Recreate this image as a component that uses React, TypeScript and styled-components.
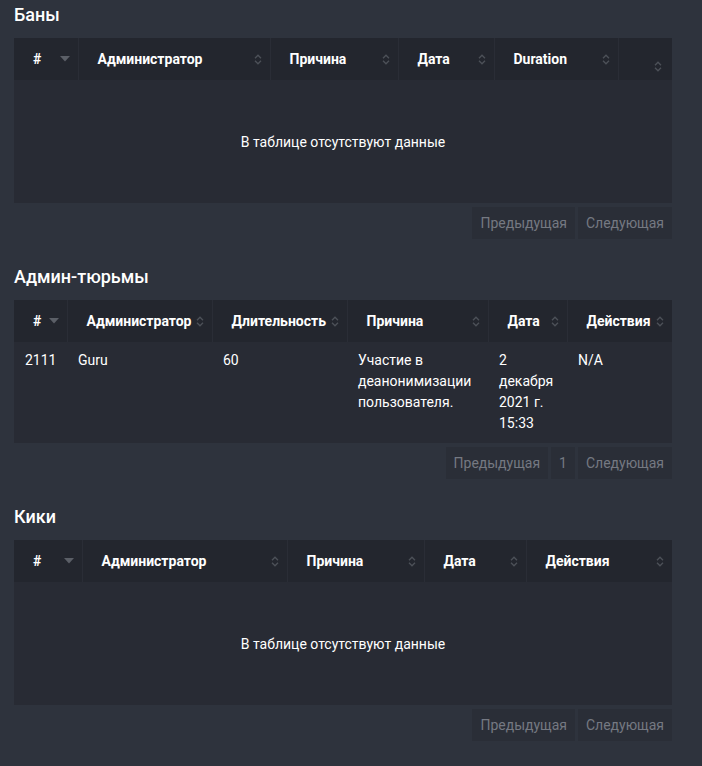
import React from 'react';
import styled, { createGlobalStyle } from 'styled-components';

type Column = { title: string; width: number; sort?: 'desc' | 'both'; iconLow?: boolean };

interface ISectionProps {
  title: string;
  columns: Column[];
  rows?: string[][];
  pages?: number[];
}

const GlobalStyle = createGlobalStyle`
  html, body {
    margin: 0;
    padding: 0;
    background: #2e333d;
  }
  body {
    font-family: Roboto, "Noto Sans", "Liberation Sans", sans-serif;
    color: #ffffff;
    font-size: 14px;
  }
`;

const SortIcon: React.FC<{ kind: 'desc' | 'both' }> = ({ kind }) =>
  kind === 'desc' ? (
    <Icon width="10" height="6" viewBox="0 0 10 6">
      <path d="M0 0 L10 0 L5 5.5 Z" fill="#5b5f67" />
    </Icon>
  ) : (
    <Icon width="8" height="11" viewBox="0 0 8 11">
      <path d="M1 4.2 L4 1.2 L7 4.2 M1 6.8 L4 9.8 L7 6.8" fill="none" stroke="#4d5159" strokeWidth="1.3" />
    </Icon>
  );

const Section: React.FC<ISectionProps> = ({ title, columns, rows = [], pages = [] }) => (
  <Block>
    <Title>{title}</Title>
    <Table>
      <colgroup>
        {columns.map((c, i) => <Col key={i} $w={c.width} />)}
      </colgroup>
      <thead>
        <tr>
          {columns.map((c, i) => (
            <HeadCell key={i} $low={c.iconLow}>
              <HeadInner>
                <span>{c.title}</span>
                {c.sort ? <SortIcon kind={c.sort} /> : null}
              </HeadInner>
            </HeadCell>
          ))}
        </tr>
      </thead>
      <tbody>
        {rows.length ? rows.map((r, i) => (
          <tr key={i}>
            {r.map((v, j) => <BodyCell key={j}>{v}</BodyCell>)}
          </tr>
        )) : (
          <tr>
            <EmptyCell colSpan={columns.length}>В таблице отсутствуют данные</EmptyCell>
          </tr>
        )}
      </tbody>
    </Table>
    <Pager>
      <PageButton>Предыдущая</PageButton>
      {pages.map(p => <PageButton key={p}>{p}</PageButton>)}
      <PageButton>Следующая</PageButton>
    </Pager>
  </Block>
);

const App: React.FC = () => (
  <>
    <GlobalStyle />
    <Page>
      <Section
        title="Баны"
        columns={[
          { title: '#', width: 64, sort: 'desc' },
          { title: 'Администратор', width: 192, sort: 'both' },
          { title: 'Причина', width: 128, sort: 'both' },
          { title: 'Дата', width: 96, sort: 'both' },
          { title: 'Duration', width: 124, sort: 'both' },
          { title: '', width: 54, sort: 'both', iconLow: true },
        ]}
      />
      <Section
        title="Админ-тюрьмы"
        columns={[
          { title: '#', width: 53, sort: 'desc' },
          { title: 'Администратор', width: 145, sort: 'both' },
          { title: 'Длительность', width: 135, sort: 'both' },
          { title: 'Причина', width: 141, sort: 'both' },
          { title: 'Дата', width: 79, sort: 'both' },
          { title: 'Действия', width: 105, sort: 'both' },
        ]}
        rows={[['2111', 'Guru', '60', 'Участие в деанонимизации пользователя.', '2 декабря 2021 г. 15:33', 'N/A']]}
        pages={[1]}
      />
      <Section
        title="Кики"
        columns={[
          { title: '#', width: 68, sort: 'desc' },
          { title: 'Администратор', width: 205, sort: 'both' },
          { title: 'Причина', width: 137, sort: 'both' },
          { title: 'Дата', width: 102, sort: 'both' },
          { title: 'Действия', width: 146, sort: 'both' },
        ]}
      />
    </Page>
  </>
);

const Page = styled.div`
  padding: 4px 30px 20px 14px;
`;

const Block = styled.section`
  margin-bottom: 27px;
`;

const Title = styled.h3`
  margin: 0 0 12px;
  font-size: 18px;
  line-height: 22px;
  font-weight: 500;
  color: #ffffff;
`;

const Table = styled.table`
  width: 100%;
  table-layout: fixed;
  border-collapse: collapse;
  background: #282b34;
`;

const Col = styled.col<{ $w: number }>`
  width: ${p => p.$w}px;
`;

const HeadCell = styled.th<{ $low?: boolean }>`
  background: #23262e;
  border-left: 1px solid #2a2d36;
  padding: ${p => (p.$low ? '19px 10px 5px 18px' : '12px 8px 12px 19px')};
  vertical-align: ${p => (p.$low ? 'bottom' : 'middle')};
  font-size: 14px;
  font-weight: 700;
  text-align: left;
  line-height: 18px;
  &:first-child {
    border-left: none;
  }
`;

const HeadInner = styled.div`
  display: flex;
  align-items: center;
  justify-content: space-between;
  gap: 4px;
  height: 18px;
  white-space: nowrap;
`;

const Icon = styled.svg`
  flex-shrink: 0;
  display: block;
`;

const BodyCell = styled.td`
  padding: 8px 10px 9px 11px;
  vertical-align: top;
  line-height: 21px;
  font-size: 14px;
  color: #ffffff;
`;

const EmptyCell = styled.td`
  height: 123px;
  padding: 0;
  text-align: center;
  vertical-align: middle;
  font-size: 14px;
`;

const Pager = styled.div`
  display: flex;
  justify-content: flex-end;
  gap: 3px;
  margin-top: 4px;
`;

const PageButton = styled.span`
  display: flex;
  align-items: center;
  height: 32px;
  padding: 0 8px;
  background: #2a2e37;
  color: #757982;
  font-size: 14px;
`;

export default App;
